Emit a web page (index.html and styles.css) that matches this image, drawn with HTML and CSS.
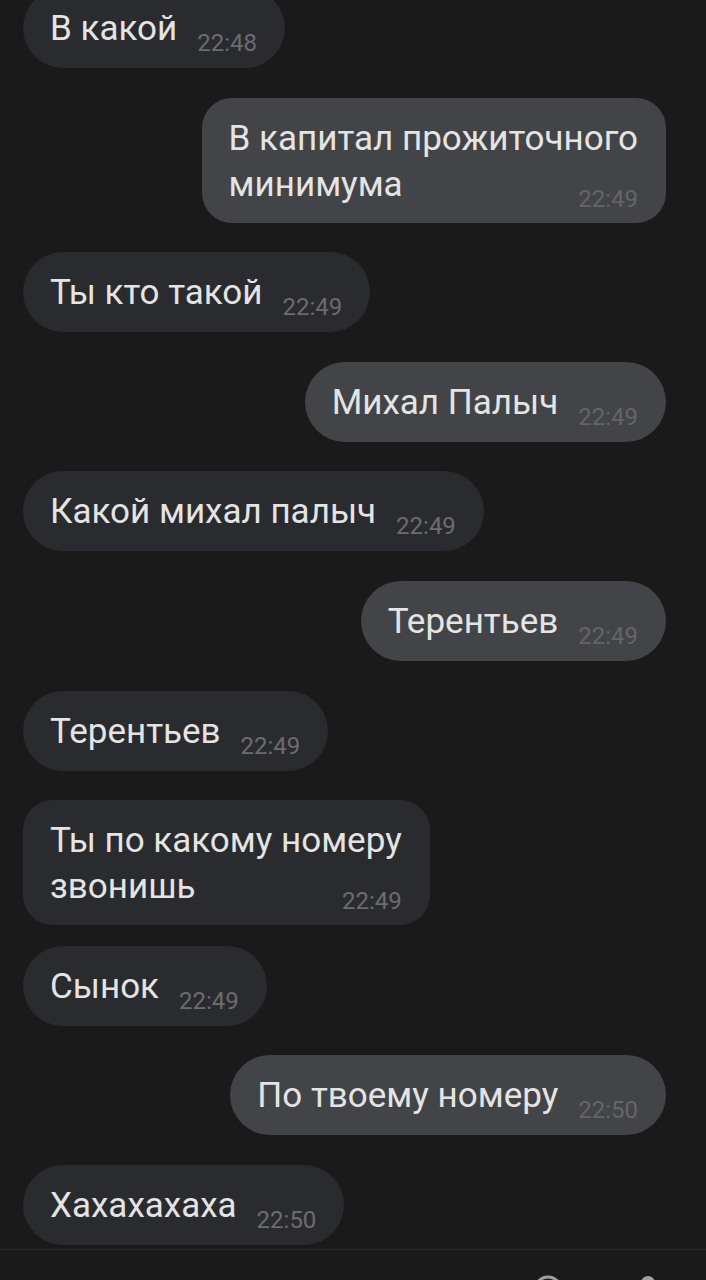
FILE: index.html
```html
<!DOCTYPE html>
<html lang="ru">
<head>
  <meta charset="UTF-8">
  <title>Чат</title>
  <link rel="stylesheet" href="styles.css">
</head>
<body>
  <div class="screen">
    <div class="chat">
      <div class="bubble in"><span class="msg">В какой</span><span class="time">22:48</span></div>

      <div class="bubble out multi">
        <div class="msg">В капитал прожиточного</div>
        <div class="last"><span class="msg">минимума</span><span class="time">22:49</span></div>
      </div>

      <div class="bubble in"><span class="msg">Ты кто такой</span><span class="time">22:49</span></div>
      <div class="bubble out"><span class="msg">Михал Палыч</span><span class="time">22:49</span></div>
      <div class="bubble in"><span class="msg">Какой михал палыч</span><span class="time">22:49</span></div>
      <div class="bubble out"><span class="msg">Терентьев</span><span class="time">22:49</span></div>
      <div class="bubble in"><span class="msg">Терентьев</span><span class="time">22:49</span></div>

      <div class="bubble in multi">
        <div class="msg">Ты по какому номеру</div>
        <div class="last"><span class="msg">звонишь</span><span class="time">22:49</span></div>
      </div>

      <div class="bubble in tight"><span class="msg">Сынок</span><span class="time">22:49</span></div>
      <div class="bubble out"><span class="msg">По твоему номеру</span><span class="time">22:50</span></div>
      <div class="bubble in"><span class="msg">Хахахахаха</span><span class="time">22:50</span></div>
    </div>

    <div class="composer">
      <svg class="icon" width="32" height="32" viewBox="0 0 32 32">
        <circle cx="16" cy="16" r="13" fill="none" stroke="#9c9fa3" stroke-width="3"/>
      </svg>
      <svg class="icon" width="24" height="32" viewBox="0 0 24 32">
        <rect x="5" y="2" width="14" height="20" rx="7" fill="#9c9fa3"/>
      </svg>
    </div>
  </div>
</body>
</html>
```

FILE: styles.css
```css
body {
  margin: 0;
  background-color: #1a1a1a;
  font-family: Roboto, "Noto Sans", sans-serif;
}

.screen {
  height: 1280px;
  display: flex;
  flex-direction: column;
  overflow: hidden;
}

.chat {
  flex: 0 0 1249px;
  display: flex;
  flex-direction: column;
  justify-content: flex-end;
  align-items: flex-start;
  gap: 29.6px;
  padding: 0 40px 4px 23px;
  box-sizing: border-box;
  overflow: hidden;
}

.bubble {
  display: flex;
  align-items: flex-end;
  gap: 20px;
  height: 80px;
  box-sizing: border-box;
  padding: 18px 28px 16px 27px;
  border-radius: 40px;
  color: #e4e4e4;
  font-size: 35px;
  line-height: 46px;
}

.bubble.in {
  background-color: #2a2b2e;
}

.bubble.out {
  align-self: flex-end;
  background-color: #434447;
}

.bubble.multi {
  flex-direction: column;
  align-items: stretch;
  gap: 0;
  height: 125px;
  border-radius: 30px;
  padding-bottom: 15px;
}

.bubble.tight {
  margin-top: -9px;
}

.last {
  display: flex;
  justify-content: space-between;
  align-items: flex-end;
  gap: 20px;
}

.time {
  font-size: 24px;
  line-height: 18px;
  color: #6b6c70;
}

.out .time {
  color: #646569;
}

.composer {
  flex: none;
  height: 90px;
  border-top: 1px solid #2b2b2b;
  display: flex;
  justify-content: flex-end;
  align-items: flex-start;
  gap: 72px;
  padding: 24px 46px 0 0;
}
```
